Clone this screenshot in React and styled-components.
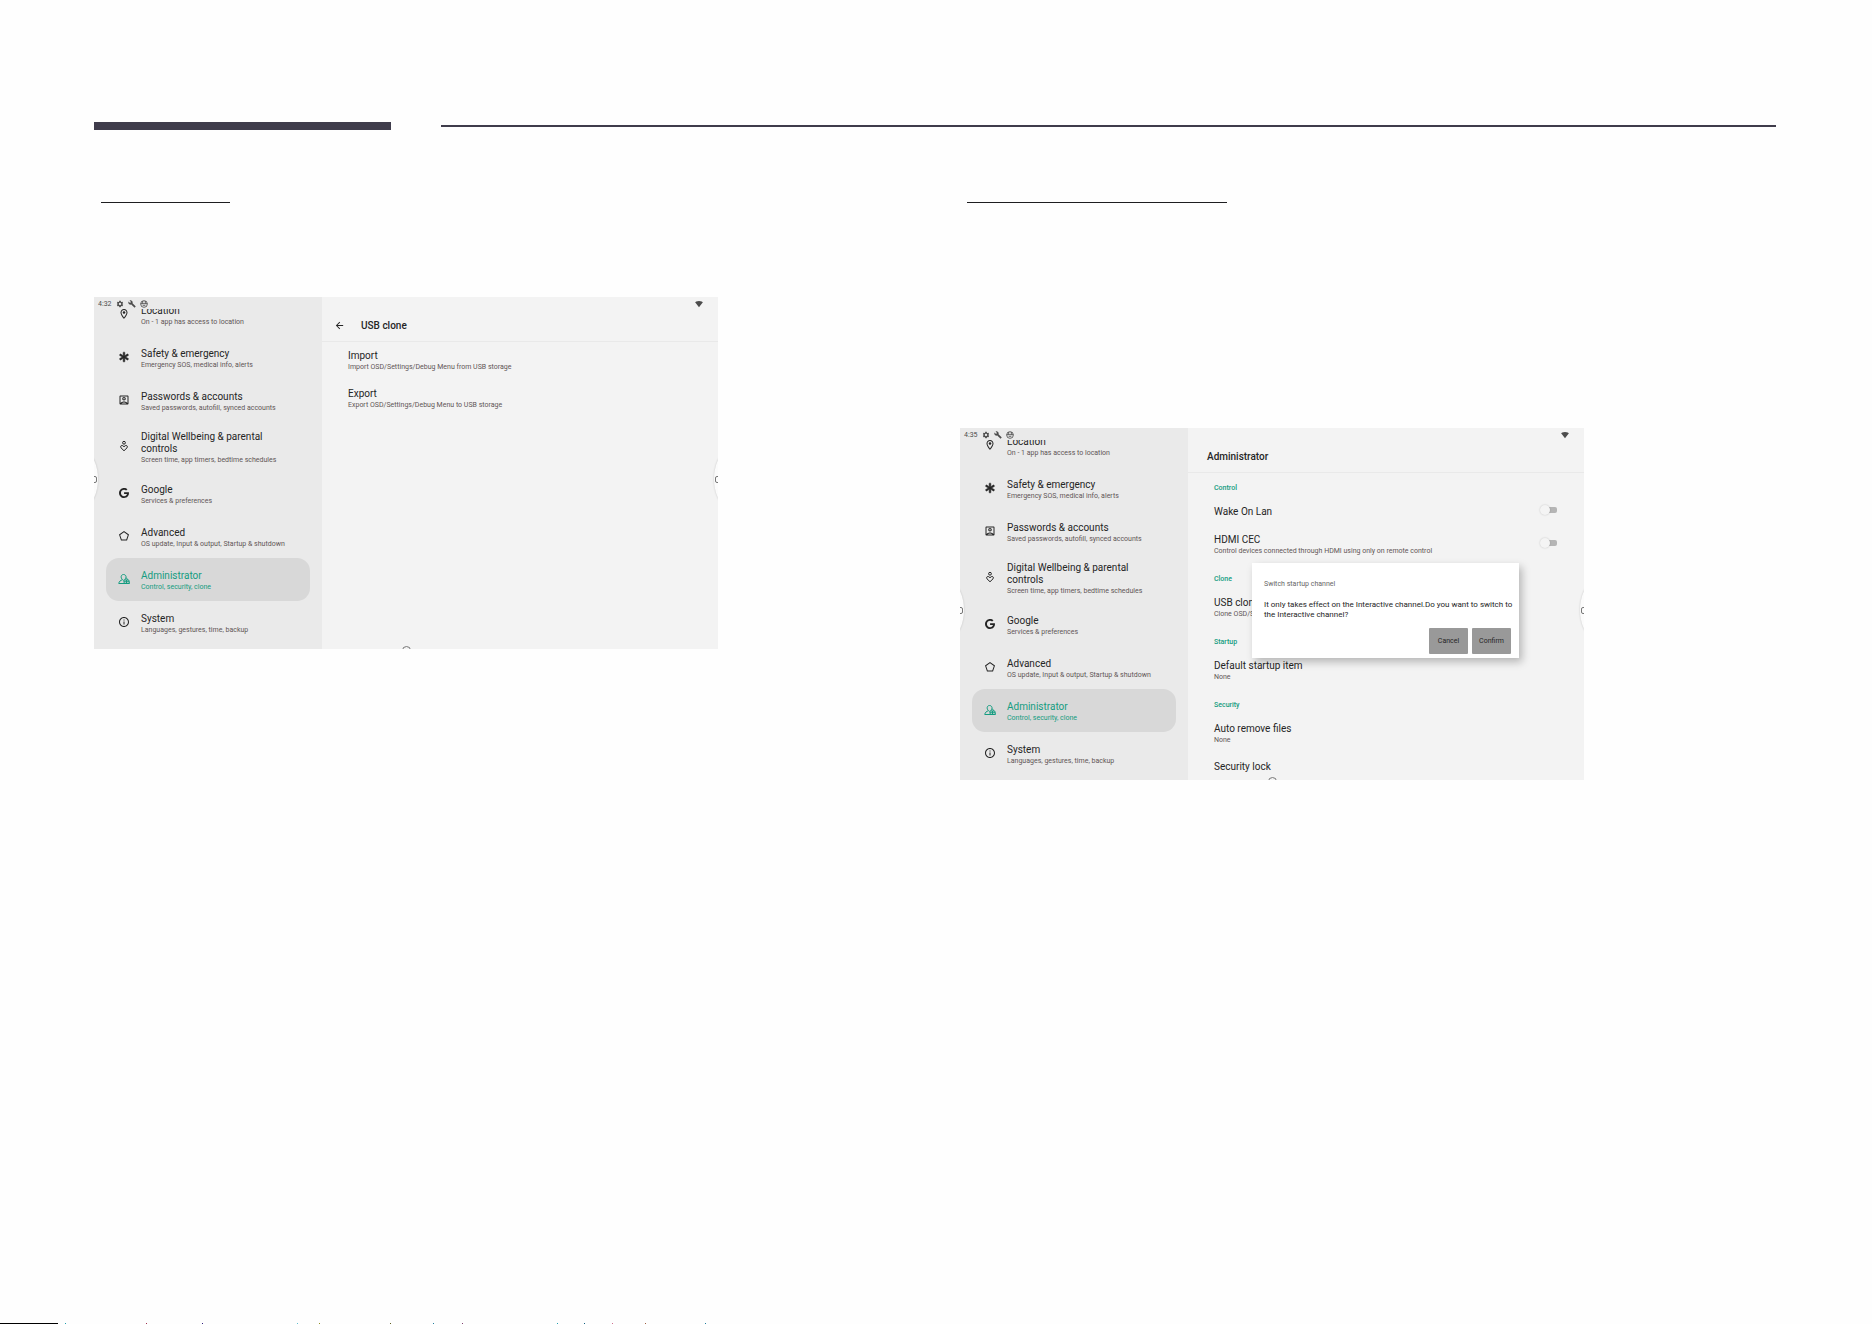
import React from 'react';
import styled, { createGlobalStyle } from 'styled-components';
import {
  MdArrowBack,
  MdBuild,
  MdInfoOutline,
  MdOutlineAccountBox,
  MdOutlineLocationOn,
  MdOutlinePentagon,
  MdSettings,
  MdSignalWifi4Bar,
} from 'react-icons/md';
import { FaAsterisk, FaGoogle } from 'react-icons/fa';

const colors = {
  slate: '#3f3c4b',
  rule: '#1e1e20',
  sidebar: '#eaeaea',
  selected: '#d8d8d8',
  surface: '#f3f3f3',
  divider: '#e9e9e9',
  text: '#252525',
  muted: '#5f5656',
  status: '#4c4c4c',
  accent: '#149c80',
};

const GlobalStyle = createGlobalStyle`
  * {
    box-sizing: border-box;
  }

  body {
    margin: 0;
    background: #fefefe;
    font-family: Roboto, 'Noto Sans', sans-serif;
    color: ${colors.text};
  }
`;

const Page = styled.main`
  position: relative;
  min-height: 100vh;
  padding: 122px 96px 0 94px;
  overflow: hidden;
`;

const PageHeader = styled.header`
  display: flex;
  align-items: center;
  gap: 50px;
  height: 8px;
`;

const ThickRule = styled.div`
  width: 297px;
  height: 8px;
  background: ${colors.slate};
`;

const ThinRule = styled.div`
  flex: 1;
  height: 2px;
  background: ${colors.slate};
`;

const Columns = styled.div`
  display: grid;
  grid-template-columns: 1fr 1fr;
  gap: 50px;
  padding-top: 72px;
`;

const Column = styled.section`
  min-width: 0;
`;

const HeadingRule = styled.div`
  width: ${(p) => p.$width};
  height: 1px;
  margin-left: 7px;
  margin-bottom: ${(p) => p.$space};
  background: ${colors.rule};
`;

const Screen = styled.div`
  position: relative;
  display: flex;
  width: 100%;
  max-width: 624px;
  aspect-ratio: 624 / 352;
  overflow: hidden;
  background: ${colors.surface};
`;

const Sidebar = styled.div`
  display: flex;
  flex-direction: column;
  flex: 0 0 228px;
  background: ${colors.sidebar};
`;

const StatusBar = styled.div`
  display: flex;
  align-items: center;
  flex: 0 0 12px;
  gap: 4px;
  padding: 2px 0 0 4px;
  font-size: 7px;
  line-height: 10px;
  color: ${colors.status};

  svg {
    width: 8px;
    height: 8px;
  }
`;

const NavClip = styled.nav`
  flex: 1;
  min-height: 0;
  overflow: hidden;
`;

const NavList = styled.ul`
  margin: -16px 12px 0;
  padding: 0;
  list-style: none;
`;

const NavLink = styled.a`
  display: flex;
  align-items: center;
  gap: 11px;
  min-height: 43px;
  padding: 7px 12px;
  border-radius: 13px;
  background: ${(p) => (p.$active ? colors.selected : 'transparent')};
  color: ${(p) => (p.$active ? colors.accent : colors.text)};
  text-decoration: none;

  svg {
    flex: none;
    width: 12px;
    height: 12px;
    margin-bottom: 2px;
  }
`;

const NavText = styled.span`
  display: block;
  min-width: 0;
  padding-top: 2px;
`;

const ItemTitle = styled.span`
  display: block;
  font-size: 10px;
  line-height: 12px;
`;

const ItemSummary = styled.span`
  display: block;
  font-size: 7px;
  line-height: 10px;
  white-space: nowrap;
  color: ${(p) => (p.$active ? colors.accent : colors.muted)};
`;

const Content = styled.div`
  position: relative;
  flex: 1;
  min-width: 0;
`;

const WifiBar = styled.div`
  display: flex;
  align-items: center;
  justify-content: flex-end;
  height: 12px;
  padding: 1px 15px 0 0;
  color: ${colors.status};

  svg {
    width: 8px;
    height: 8px;
  }
`;

const TitleBar = styled.div`
  display: flex;
  align-items: center;
  gap: 16px;
  height: 33px;
  padding-top: 1px;
  padding-left: ${(p) => (p.$back ? '12px' : '19px')};
  border-bottom: 1px solid ${colors.divider};
`;

const BackButton = styled.button`
  display: flex;
  padding: 0;
  border: 0;
  background: none;
  color: ${colors.text};

  svg {
    width: 11px;
    height: 11px;
  }
`;

const ScreenTitle = styled.h2`
  margin: 0;
  font-size: 10px;
  font-weight: 500;
  line-height: 12px;
`;

const Category = styled.h3`
  margin: 0;
  padding: 11px 26px 6px;
  font-size: 7px;
  font-weight: 500;
  line-height: 8px;
  color: ${colors.accent};
`;

const Preference = styled.div`
  display: flex;
  align-items: center;
  justify-content: space-between;
  padding: 8px 27px 8px 26px;
`;

const Switch = styled.input`
  appearance: none;
  position: relative;
  width: 17px;
  height: 10px;
  margin: -1px 0 3px;

  &::before {
    content: '';
    position: absolute;
    inset: 2px 0 2px 5px;
    border-radius: 2px;
    background: #b5b5b5;
  }

  &::after {
    content: '';
    position: absolute;
    top: 0;
    left: 0;
    width: 10px;
    height: 10px;
    border-radius: 50%;
    background: #f4f4f4;
    box-shadow: 0 0 2px rgba(0, 0, 0, 0.2);
  }
`;

const Dialog = styled.div`
  position: absolute;
  top: 135px;
  left: 64px;
  right: 65px;
  padding: 16px 4px 4px 12px;
  background: #fff;
  box-shadow: 3px 4px 8px rgba(0, 0, 0, 0.25);
`;

const DialogTitle = styled.h4`
  margin: 0 0 11px;
  font-size: 7px;
  font-weight: 400;
  line-height: 10px;
  color: #666;
`;

const DialogMessage = styled.p`
  margin: 0 0 8px;
  font-size: 8px;
  line-height: 10px;
`;

const DialogActions = styled.div`
  display: flex;
  justify-content: flex-end;
  gap: 4px;
  padding-right: 4px;
`;

const DialogButton = styled.button`
  width: 39px;
  height: 26px;
  padding: 0;
  border: 0;
  border-radius: 1px;
  background: #999;
  color: #252525;
  font-family: inherit;
  font-size: 7px;
`;

// Round tabs that peek in from the left and right edges of the screen.
const EdgeHandle = styled.span`
  position: absolute;
  top: 157px;
  ${(p) => p.$side}: -20px;
  display: flex;
  align-items: center;
  justify-content: ${(p) => (p.$side === 'left' ? 'flex-end' : 'flex-start')};
  width: 24px;
  height: 50px;
  padding: 0 1px;
  border-radius: 50%;
  background: #fbfbfb;
  box-shadow: 0 0 2px rgba(0, 0, 0, 0.2);

  &::after {
    content: '';
    width: 4px;
    height: 5px;
    border: 1px solid #777;
    border-radius: 2px;
  }
`;

const BottomHandle = styled.span`
  position: absolute;
  bottom: -6px;
  left: 50%;
  width: 9px;
  height: 9px;
  margin-left: -4px;
  border: 1px solid #777;
  border-radius: 50%;
`;

const FooterMarks = styled.svg`
  position: absolute;
  bottom: 0;
  left: 0;
`;

const WellbeingIcon = () => (
  <svg viewBox="0 0 24 24" fill="none" stroke="currentColor" strokeWidth="2">
    <circle cx="12" cy="5.5" r="2.8" />
    <path d="M12 21.5 6 15.7c-2.3-2.6.7-6.2 3.6-4.3L12 13.5l2.4-2.1c2.9-1.9 5.9 1.7 3.6 4.3z" />
  </svg>
);

const AdministratorIcon = () => (
  <svg viewBox="0 0 24 24" fill="none" stroke="currentColor" strokeWidth="2">
    <path d="M9 13.500C5 14.500 2 17 1.500 21H23" />
    <path d="M9 13.500C4.500 9 6 3 11 3c4 0 6 3.500 4.800 7" />
    <path d="M12.500 21l-1-7h10l1.500 7M12 17.500h10.500M14 14v-1c0-3.500 5-3.500 5 0v1M17 14v7" />
  </svg>
);

const GlobeIcon = () => (
  <svg viewBox="0 0 24 24" fill="none" stroke="currentColor" strokeWidth="2.5">
    <circle cx="12" cy="12" r="10" />
    <path d="M2 11h20M8 3v8M16 3v8M8 16h8" />
  </svg>
);

const navItems = [
  {
    title: 'Location',
    summary: 'On - 1 app has access to location',
    icon: <MdOutlineLocationOn />,
  },
  {
    title: 'Safety & emergency',
    summary: 'Emergency SOS, medical info, alerts',
    icon: <FaAsterisk viewBox="-60 -60 632 632" stroke="currentColor" strokeWidth="30" />,
  },
  {
    title: 'Passwords & accounts',
    summary: 'Saved passwords, autofill, synced accounts',
    icon: <MdOutlineAccountBox />,
  },
  {
    title: 'Digital Wellbeing & parental controls',
    summary: 'Screen time, app timers, bedtime schedules',
    icon: <WellbeingIcon />,
  },
  {
    title: 'Google',
    summary: 'Services & preferences',
    icon: <FaGoogle viewBox="-50 -20 588 552" />,
  },
  {
    title: 'Advanced',
    summary: 'OS update, Input & output, Startup & shutdown',
    icon: <MdOutlinePentagon />,
  },
  {
    title: 'Administrator',
    summary: 'Control, security, clone',
    icon: <AdministratorIcon />,
    active: true,
  },
  {
    title: 'System',
    summary: 'Languages, gestures, time, backup',
    icon: <MdInfoOutline />,
  },
];

const footerDots = [
  [65, '#20a0b0'],
  [146, '#a03050'],
  [202, '#302080'],
  [297, '#60c0d0'],
  [319, '#909020'],
  [390, '#606020'],
  [433, '#2080a0'],
  [462, '#804070'],
  [557, '#20a0b0'],
  [584, '#106080'],
  [612, '#d07090'],
  [645, '#a06040'],
  [705, '#2080a0'],
];

const SettingsSidebar = ({ time }) => (
  <Sidebar>
    <StatusBar>
      <span>{time}</span>
      <MdSettings />
      <MdBuild />
      <GlobeIcon />
    </StatusBar>
    <NavClip>
      <NavList>
        {navItems.map((item) => (
          <li key={item.title}>
            <NavLink href="#" $active={item.active}>
              {item.icon}
              <NavText>
                <ItemTitle>{item.title}</ItemTitle>
                <ItemSummary $active={item.active}>{item.summary}</ItemSummary>
              </NavText>
            </NavLink>
          </li>
        ))}
      </NavList>
    </NavClip>
  </Sidebar>
);

const PreferenceRow = ({ title, summary, toggle }) => (
  <Preference as={toggle ? 'label' : 'div'}>
    <span>
      <ItemTitle>{title}</ItemTitle>
      {summary && <ItemSummary>{summary}</ItemSummary>}
    </span>
    {toggle && <Switch type="checkbox" />}
  </Preference>
);

const SettingsScreen = ({ time, title, back, children }) => (
  <Screen>
    <SettingsSidebar time={time} />
    <Content>
      <WifiBar>
        <MdSignalWifi4Bar />
      </WifiBar>
      <TitleBar $back={back}>
        {back && (
          <BackButton type="button" aria-label="Back">
            <MdArrowBack />
          </BackButton>
        )}
        <ScreenTitle>{title}</ScreenTitle>
      </TitleBar>
      {children}
    </Content>
    <EdgeHandle $side="left" />
    <EdgeHandle $side="right" />
    <BottomHandle />
  </Screen>
);

const App = () => {
  return (
    <>
      <GlobalStyle />
      <Page>
        <PageHeader>
          <ThickRule />
          <ThinRule />
        </PageHeader>

        <Columns>
          <Column>
            <HeadingRule $width="129px" $space="94px" />
            <SettingsScreen time="4:32" title="USB clone" back>
              <PreferenceRow
                title="Import"
                summary="Import OSD/Settings/Debug Menu from USB storage"
              />
              <PreferenceRow
                title="Export"
                summary="Export OSD/Settings/Debug Menu to USB storage"
              />
            </SettingsScreen>
          </Column>

          <Column>
            <HeadingRule $width="260px" $space="225px" />
            <SettingsScreen time="4:35" title="Administrator">
              <Category>Control</Category>
              <PreferenceRow title="Wake On Lan" toggle />
              <PreferenceRow
                title="HDMI CEC"
                summary="Control devices connected through HDMI using only on remote control"
                toggle
              />
              <Category>Clone</Category>
              <PreferenceRow title="USB clone" summary="Clone OSD/Settings" />
              <Category>Startup</Category>
              <PreferenceRow title="Default startup item" summary="None" />
              <Category>Security</Category>
              <PreferenceRow title="Auto remove files" summary="None" />
              <PreferenceRow title="Security lock" />

              <Dialog role="dialog" aria-labelledby="dialog-title">
                <DialogTitle id="dialog-title">Switch startup channel</DialogTitle>
                <DialogMessage>
                  It only takes effect on the Interactive channel.Do you want to switch to
                  the Interactive channel?
                </DialogMessage>
                <DialogActions>
                  <DialogButton type="button">Cancel</DialogButton>
                  <DialogButton type="button">Confirm</DialogButton>
                </DialogActions>
              </Dialog>
            </SettingsScreen>
          </Column>
        </Columns>

        <FooterMarks width="720" height="1">
          <rect width="58" height="1" fill="#000" />
          {footerDots.map(([x, fill]) => (
            <rect key={x} x={x} width="1" height="1" fill={fill} />
          ))}
        </FooterMarks>
      </Page>
    </>
  );
};

export default App;
